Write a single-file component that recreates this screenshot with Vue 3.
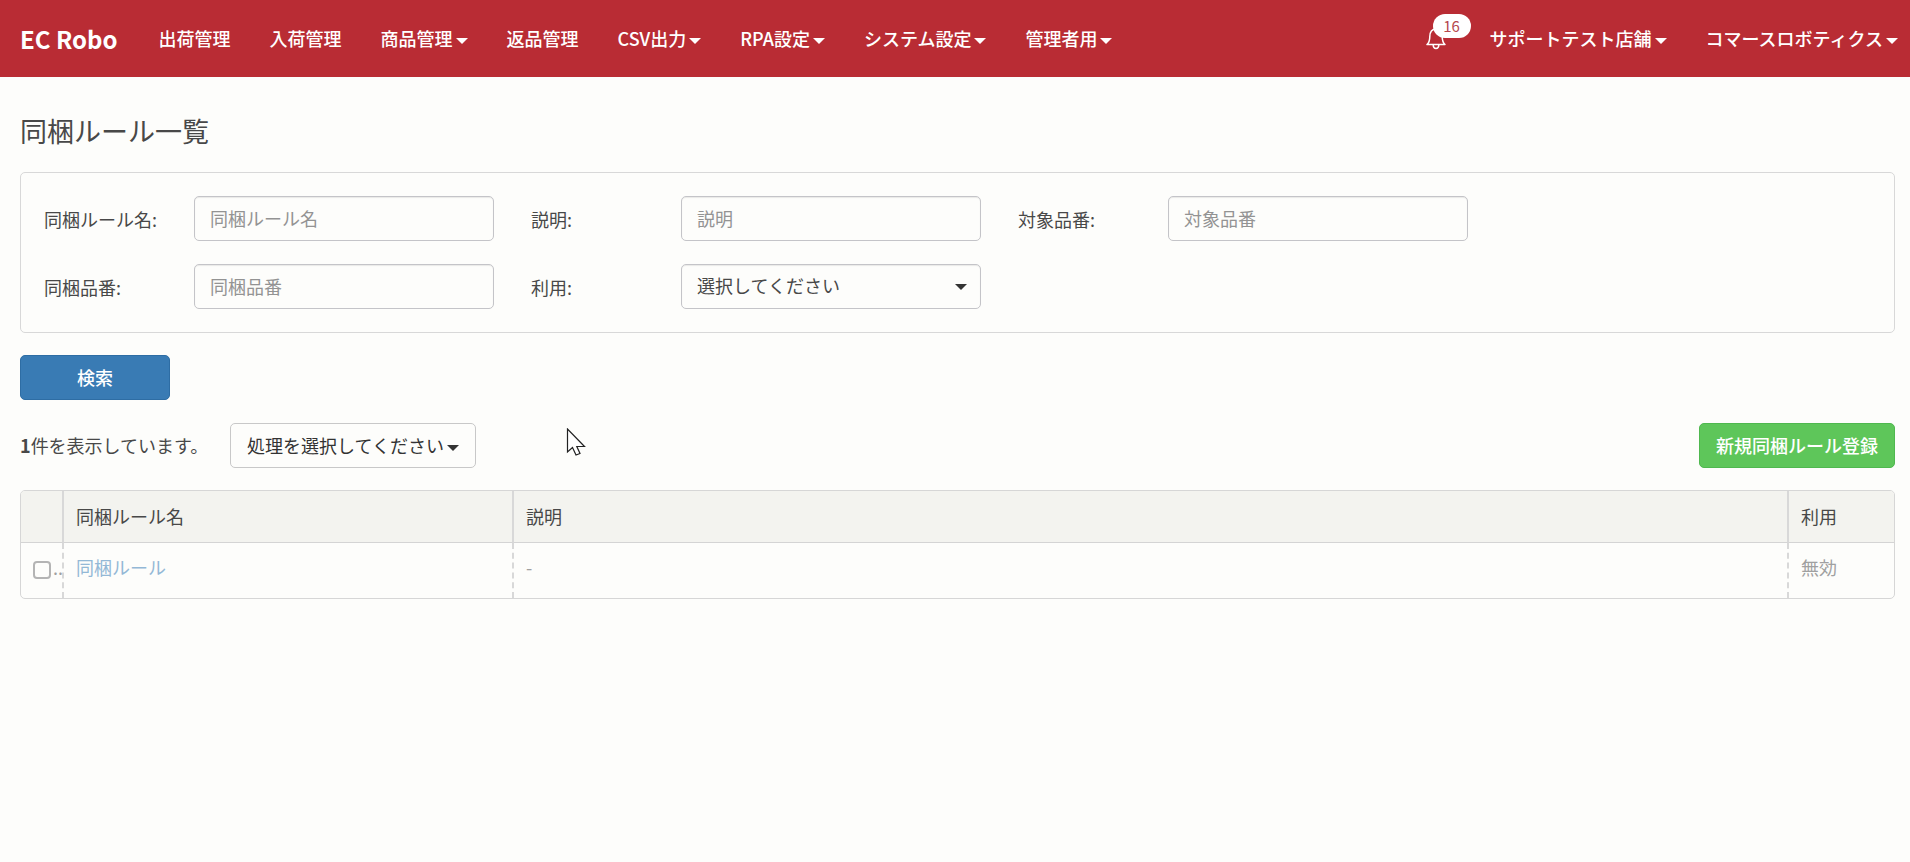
<script setup>
import { ref } from 'vue'

const menus = [
  { label: '出荷管理' },
  { label: '入荷管理' },
  { label: '商品管理', caret: true },
  { label: '返品管理' },
  { label: 'CSV出力', caret: true },
  { label: 'RPA設定', caret: true },
  { label: 'システム設定', caret: true },
  { label: '管理者用', caret: true },
]
const accountMenus = ['サポートテスト店舗', 'コマースロボティクス']

const fields = ref([
  { id: 'rule-name', label: '同梱ルール名', value: '' },
  { id: 'description', label: '説明', value: '' },
  { id: 'target-sku', label: '対象品番', value: '' },
  { id: 'bundle-sku', label: '同梱品番', value: '' },
  { id: 'usage', label: '利用', value: '', options: ['有効', '無効'] },
])
const rows = ref([{ name: '同梱ルール', description: '-', usage: '無効', checked: false }])
</script>

<template>
  <div class="app">
    <header class="navbar">
      <a class="brand" href="#">EC Robo</a>
      <nav class="menu">
        <a v-for="m in menus" :key="m.label" class="menu-item" href="#">
          {{ m.label }}<span v-if="m.caret" class="caret"></span>
        </a>
      </nav>
      <div class="account">
        <button class="bell" type="button" aria-label="お知らせ">
          <svg width="20" height="24" viewBox="0 0 20 24" fill="none" stroke="currentColor" stroke-width="1.5">
            <path d="M1 18.5H19C16.6 16.4 16.2 14 16.2 10.5C16.2 6 14 3 10 3S3.8 6 3.8 10.5C3.8 14 3.4 16.4 1 18.5Z" stroke-linejoin="round" />
            <path d="M10 3V1M7.2 19C7.2 21.2 8.4 22.4 10 22.4S12.8 21.2 12.8 19" />
          </svg>
          <span class="badge">16</span>
        </button>
        <a v-for="a in accountMenus" :key="a" class="menu-item" href="#">{{ a }}<span class="caret"></span></a>
      </div>
    </header>

    <main class="page">
      <h1 class="title">同梱ルール一覧</h1>

      <form class="search" @submit.prevent>
        <div class="panel">
          <div v-for="f in fields" :key="f.id" class="field">
            <label :for="f.id">{{ f.label }}:</label>
            <div v-if="f.options" class="select-wrap">
              <select :id="f.id" v-model="f.value" class="control">
                <option value="">選択してください</option>
                <option v-for="o in f.options" :key="o">{{ o }}</option>
              </select>
              <span class="caret select-caret"></span>
            </div>
            <input v-else :id="f.id" v-model="f.value" class="control" type="text" :placeholder="f.label" />
          </div>
        </div>
        <button class="btn btn-primary" type="submit">検索</button>
      </form>

      <div class="toolbar">
        <p class="count"><b>1</b>件を表示しています。</p>
        <button class="btn btn-default" type="button">処理を選択してください<span class="caret"></span></button>
        <button class="btn btn-success" type="button">新規同梱ルール登録</button>
      </div>

      <div class="table-box">
        <table>
          <colgroup>
            <col class="col-check" />
            <col class="col-name" />
            <col />
            <col class="col-usage" />
          </colgroup>
          <thead>
            <tr>
              <th></th>
              <th>同梱ルール名</th>
              <th>説明</th>
              <th>利用</th>
            </tr>
          </thead>
          <tbody>
            <tr v-for="r in rows" :key="r.name">
              <td class="check-cell">
                <div class="check"><input v-model="r.checked" type="checkbox" :aria-label="r.name" />..</div>
              </td>
              <td><a href="#">{{ r.name }}</a></td>
              <td>{{ r.description }}</td>
              <td>{{ r.usage }}</td>
            </tr>
          </tbody>
        </table>
      </div>
    </main>

    <svg class="pointer" width="20" height="30" viewBox="0 0 20 30">
      <path d="M1.5 1V24L6.5 19.5L10 27L14 25.5L10.8 18.5H18.5Z" fill="#fff" stroke="#222" stroke-width="1.2" />
    </svg>
  </div>
</template>

<style>
body {
  background: #fdfdfb;
}
</style>

<style scoped>
.app {
  font-family: "Noto Sans CJK JP", "Noto Sans", sans-serif;
  font-size: 18px;
  line-height: 27px;
  color: #484848;
}
.app * {
  box-sizing: border-box;
}
a {
  text-decoration: none;
}
button,
input,
select {
  font: inherit;
}
.navbar {
  display: flex;
  align-items: center;
  height: 77px;
  padding: 0 12px 1px 20px;
  background: #b92c34;
  color: #fff;
  white-space: nowrap;
}
.navbar a {
  color: #fff;
}
.brand {
  margin-right: 41px;
  font-size: 24px;
  font-weight: 700;
}
.menu,
.account {
  display: flex;
  align-items: center;
  gap: 39px;
  font-weight: 500;
}
.account {
  margin-left: auto;
}
.caret {
  display: inline-block;
  margin-left: 3px;
  vertical-align: 2px;
  border: 6px solid transparent;
  border-top-color: currentColor;
  border-bottom: 0;
}
.bell {
  position: relative;
  display: flex;
  padding: 0;
  border: 0;
  background: none;
  color: #fff;
  margin-right: 5px;
}
.badge {
  position: absolute;
  left: 7px;
  top: -12px;
  width: 38px;
  border-radius: 12px;
  background: #fff;
  color: #b5484e;
  font-size: 15px;
  font-weight: 400;
  line-height: 24px;
  text-align: center;
}
.page {
  padding: 34px 15px 23px 20px;
}
.title {
  margin: 0 0 21px;
  font-size: 27px;
  font-weight: 400;
  line-height: 40px;
}
.panel {
  display: flex;
  flex-wrap: wrap;
  gap: 23px 37px;
  padding: 23px;
  border: 1px solid #d8d8d8;
  border-radius: 5px;
}
.field {
  display: flex;
  align-items: center;
}
.field label {
  width: 150px;
  padding-top: 2px;
}
.control {
  width: 300px;
  height: 45px;
  padding: 0 15px 2px;
  border: 1px solid #c4c4c8;
  border-radius: 5px;
  background: #fdfdfb;
  box-shadow: inset 0 1px 1px rgba(0, 0, 0, 0.08);
  color: #484848;
}
.control::placeholder {
  color: #939393;
}
.select-wrap {
  position: relative;
  display: flex;
}
select.control {
  appearance: none;
}
.select-caret {
  position: absolute;
  right: 14px;
  top: 20px;
  color: #333;
  pointer-events: none;
}
.btn {
  height: 45px;
  border: 1px solid;
  border-radius: 5px;
  padding: 0 16px;
}
.btn-primary {
  display: block;
  width: 150px;
  margin: 22px 0 23px;
  border-color: #2e6da4;
  background: #397bb4;
  color: #fff;
  font-weight: 500;
}
.toolbar {
  display: flex;
  align-items: center;
  margin-bottom: 22px;
}
.count {
  width: 210px;
  margin: 0;
}
.btn-default {
  border-color: #c8c8c8;
  background: #fdfdfb;
  color: #333;
}
.btn-success {
  margin-left: auto;
  border-color: #4fb84f;
  background: #5ec65a;
  color: #fff;
  font-weight: 500;
}
.table-box {
  border: 1px solid #d6d6d6;
  border-radius: 5px;
  overflow: hidden;
}
table {
  width: 100%;
  table-layout: fixed;
  border-collapse: separate;
  border-spacing: 0;
}
.col-check {
  width: 43px;
}
.col-name {
  width: 450px;
}
.col-usage {
  width: 105px;
}
th {
  height: 52px;
  padding: 0 12px;
  border-bottom: 1px solid #d4d4d4;
  border-right: 2px solid #d8d8d8;
  background: #f3f3ef;
  font-weight: 400;
  text-align: left;
}
td {
  height: 55px;
  padding: 11px 12px 0;
  border-right: 2px dashed #d8d8d8;
  vertical-align: top;
  color: #a0a0a0;
}
th:last-child,
td:last-child {
  border-right: 0;
}
td a {
  color: #93b8d6;
}
.check-cell {
  padding-right: 0;
}
.check {
  display: flex;
  overflow: hidden;
}
.check input {
  appearance: none;
  flex: none;
  width: 18px;
  height: 18px;
  margin: 7px 2px 0 0;
  border: 2px solid #b4b4b4;
  border-radius: 4px;
  background: #fdfdfb;
}
.pointer {
  position: absolute;
  left: 566px;
  top: 428px;
  pointer-events: none;
}
</style>
